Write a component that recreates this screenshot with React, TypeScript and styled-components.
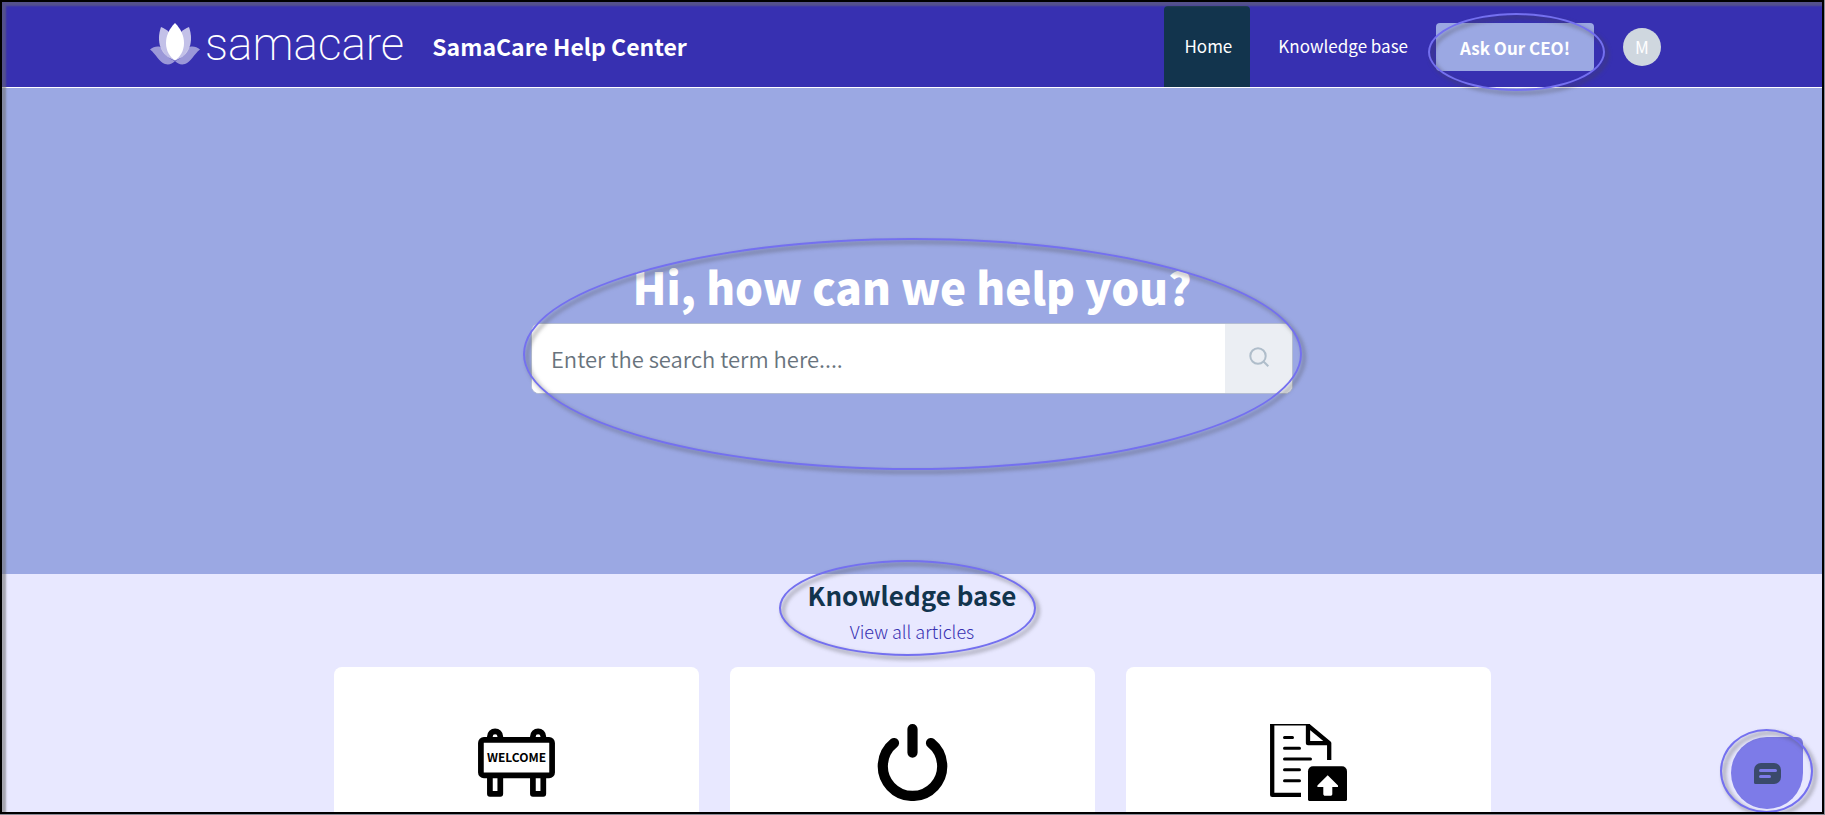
import React from "react";
import styled, { createGlobalStyle } from "styled-components";

const GlobalStyle = createGlobalStyle`
  * { box-sizing: border-box; }
  body {
    margin: 0;
    background: #8a8a96;
    font-family: "Noto Sans CJK SC", "Open Sans", sans-serif;
    color: #12344d;
  }
  a { color: inherit; text-decoration: none; }
  h1, h2, p { margin: 0; }
`;

const Frame = styled.div`
  position: relative;
  height: calc(100vh - 1px);
  margin: 0 1px 1px 0;
  border: 2px solid #000;
  background: #e8e8ff;
  overflow: hidden;

  &::after {
    content: "";
    position: absolute;
    inset: 0;
    z-index: 5;
    pointer-events: none;
    box-shadow: inset 4px 4px 2px rgba(110, 110, 110, 0.55);
  }
`;

const Page = styled.div`
  height: 100%;
  overflow: auto;
  scrollbar-width: none;
`;

const Header = styled.header`
  position: relative;
  z-index: 2;
  display: flex;
  align-items: stretch;
  justify-content: space-between;
  height: 86px;
  padding: 4px 161px 0 148px;
  background: #3730b1;
  border-bottom: 1px solid #fff;
`;

const Brand = styled.a`
  display: flex;
  align-items: center;
  gap: 28px;
  color: #fff;
`;

const Logo = styled.span`
  display: flex;
  align-items: center;
  gap: 5px;
  padding-bottom: 6px;
`;

const LogoWord = styled.span`
  font: 200 46px/52px Roboto, "Liberation Sans", sans-serif;
  color: #fff;
`;

const SiteTitle = styled.span`
  font-size: 23px;
  font-weight: 700;
  line-height: 32px;
  padding-bottom: 2px;
`;

const Nav = styled.nav`
  display: flex;
  align-items: center;
`;

const NavLink = styled.a<{ $active?: boolean }>`
  display: flex;
  align-items: center;
  align-self: stretch;
  padding: 0 ${(p) => (p.$active ? 18 : 28)}px 2px ${(p) => (p.$active ? 20 : 28)}px;
  border-radius: 4px 4px 0 0;
  background: ${(p) => (p.$active ? "#12344d" : "transparent")};
  color: #fff;
  font-size: 17px;
  line-height: 24px;
`;

const Marked = styled.div`
  position: relative;
`;

const Ring = styled.span<{ $inset: string }>`
  position: absolute;
  inset: ${(p) => p.$inset};
  border: 2px solid #7470f0;
  border-radius: 50%;
  filter: drop-shadow(3px 3px 2px rgba(70, 70, 70, 0.7));
  pointer-events: none;
`;

const AskButton = styled.button`
  display: block;
  height: 48px;
  padding: 2px 24px 0;
  border: 0;
  border-radius: 4px;
  background: #9ba8e3;
  color: #fff;
  font: inherit;
  font-size: 17px;
  font-weight: 700;
  line-height: 24px;
  white-space: nowrap;
`;

const Avatar = styled.button`
  width: 38px;
  height: 38px;
  margin-left: 29px;
  padding: 0;
  border: 0;
  border-radius: 50%;
  background: #cfd7df;
  color: #fff;
  font: inherit;
  font-size: 17px;
`;

const Hero = styled.section`
  display: flex;
  flex-direction: column;
  align-items: center;
  padding: 172px 24px 180px;
  background: #9ba8e3;
`;

const HeroBlock = styled.div`
  position: relative;
  width: 100%;
  max-width: 762px;
`;

const HeroTitle = styled.h1`
  padding-bottom: 11px;
  color: #fff;
  font-size: 44px;
  font-weight: 900;
  line-height: 52px;
  text-align: center;
`;

const SearchForm = styled.form`
  display: flex;
  height: 71px;
  border: 1px solid #b4bdd2;
  border-radius: 8px;
  background: #fff;
  overflow: hidden;
`;

const SearchInput = styled.input`
  flex: 1;
  min-width: 0;
  padding: 0 19px 2px;
  border: 0;
  outline: 0;
  background: #fff;
  color: #12344d;
  font: inherit;
  font-size: 22px;
  font-weight: 350;

  &::placeholder { color: #68737d; opacity: 1; }
`;

const SearchButton = styled.button`
  display: flex;
  align-items: center;
  justify-content: center;
  width: 67px;
  padding: 0 0 4px;
  border: 0;
  background: #ebeef3;
`;

const Knowledge = styled.section`
  display: flex;
  flex-direction: column;
  align-items: center;
  padding: 4px 24px 40px;
`;

const SectionHead = styled.div`
  position: relative;
  text-align: center;
`;

const SectionTitle = styled.h2`
  font-size: 26px;
  font-weight: 700;
  line-height: 34px;
`;

const ViewAll = styled.a`
  display: block;
  color: #3730b1;
  font-size: 18px;
  font-weight: 300;
  line-height: 38px;
`;

const Cards = styled.div`
  display: grid;
  grid-template-columns: repeat(3, 1fr);
  gap: 31px;
  width: 100%;
  max-width: 1157px;
  margin-top: 17px;
`;

const Card = styled.a`
  display: flex;
  justify-content: center;
  padding: 57px 24px;
  border-radius: 8px;
  background: #fff;
`;

const ChatDock = styled.div`
  position: absolute;
  right: 19px;
  bottom: 3px;
  z-index: 3;
`;

const ChatButton = styled.button`
  display: flex;
  align-items: center;
  justify-content: center;
  width: 72px;
  height: 72px;
  padding: 0;
  border: 0;
  border-radius: 36px 6px 36px 36px;
  background: #7d7be8;
`;

const Lotus = () => (
  <svg width="50" height="42" viewBox="0 0 50 42" aria-hidden="true">
    <g fill="#fff">
      <path opacity="0.5" d="M0 26.5C3 24 7 23 10.500 24C14 31 19 36 25 38C22 41 19 42 15 41C9 39 6 31 0 26.500Z" />
      <path opacity="0.5" d="M50 26.500C47 24 43 23 39.500 24C36 31 31 36 25 38C28 41 31 42 35 41C41 39 44 31 50 26.500Z" />
      <path opacity="0.7" d="M11 4C14 5 17 7 19 9L25 37.500C10 33 6 18 11 4Z" />
      <path opacity="0.7" d="M39 4C36 5 33 7 31 9L25 37.500C40 33 44 18 39 4Z" />
      <path d="M25 0C31 6 34 13 34 20C34 28 30 34 25 37.500C20 34 16 28 16 20C16 13 19 6 25 0Z" />
    </g>
  </svg>
);

const SearchIcon = () => (
  <svg width="20" height="20" viewBox="0 0 20 20" fill="none" stroke="#afbdca" strokeWidth="2" aria-hidden="true">
    <circle cx="9" cy="9" r="7.700" />
    <path d="M14.500 14.500L19.300 19.300" />
  </svg>
);

const WelcomeIcon = () => (
  <svg width="77" height="77" viewBox="0 0 77 77" fill="none" stroke="#000" strokeWidth="5.700">
    <rect x="2.900" y="15.900" width="71.200" height="35.500" rx="3" />
    <path d="M11.900 15V12.500a5.200 5.200 0 0 1 10.400 0V15M54.900 15V12.500a5.200 5.200 0 0 1 10.400 0V15" />
    <path strokeLinejoin="round" d="M11.900 52V69.800H22.300V52M54.900 52V69.800H65.300V52" />
    <text x="38.500" y="38" textAnchor="middle" fill="#000" stroke="none" fontFamily="Noto Sans CJK SC, sans-serif" fontWeight="700" fontSize="12">
      WELCOME
    </text>
  </svg>
);

const PowerIcon = () => (
  <svg width="77" height="77" viewBox="0 0 77 77" fill="none" stroke="#000" strokeWidth="10.200" strokeLinecap="round">
    <path d="M38.500 5.100V28.600M20 19A29.700 29.700 0 1 0 57 19" />
  </svg>
);

const UploadIcon = () => (
  <svg width="77" height="77" viewBox="0 0 77 77" fill="none" stroke="#000" strokeWidth="4.300">
    <path strokeLinejoin="round" d="M2.200 0V70.900H31" />
    <path strokeWidth="1.500" d="M0 .7H40" />
    <path strokeLinejoin="round" d="M38 1.500V19.200H59.200ZM59.200 19V36" />
    <path strokeWidth="3" strokeLinecap="round" d="M14.500 13.500H22.500M14.500 24.300H29.500M14.500 35H40.500M14.500 45.700H29.500M14.500 56.700H29.500" />
    <path fill="#000" stroke="none" d="M43 42.300H72A5 5 0 0 1 77 47.300V76L76 77H39L38 76V47.300A5 5 0 0 1 43 42.300Z" />
    <path fill="#fff" stroke="none" d="M57.700 51.300L68 61.500V63H62.300V70.500L61.300 71.700H54.300L53.300 70.500V63H47.400V61.500Z" />
  </svg>
);

const ChatIcon = () => (
  <svg width="27" height="21" viewBox="0 0 27 21" aria-hidden="true">
    <path fill="#3a4a6b" d="M7 0H20A7 7 0 0 1 27 7V14A7 7 0 0 1 20 21H1.500A1.500 1.500 0 0 1 0 19.500V7A7 7 0 0 1 7 0Z" />
    <path stroke="#7d7be8" strokeWidth="3" strokeLinecap="round" d="M6.500 7.500H21.500M6.500 13.500H15.500" />
  </svg>
);

const categories = [
  { label: "Welcome", Icon: WelcomeIcon },
  { label: "Getting started", Icon: PowerIcon },
  { label: "Uploads", Icon: UploadIcon },
];

export default function App() {
  return (
    <Frame>
      <GlobalStyle />
      <Page>
        <Header>
          <Brand href="#">
            <Logo>
              <Lotus />
              <LogoWord>samacare</LogoWord>
            </Logo>
            <SiteTitle>SamaCare Help Center</SiteTitle>
          </Brand>
          <Nav>
            <NavLink href="#" $active>Home</NavLink>
            <NavLink href="#knowledge">Knowledge base</NavLink>
            <Marked>
              <AskButton type="button">Ask Our CEO!</AskButton>
              <Ring $inset="-10px -11px -20px -8px" />
            </Marked>
            <Avatar type="button" aria-label="Account">M</Avatar>
          </Nav>
        </Header>
        <main>
          <Hero>
            <HeroBlock>
              <HeroTitle>Hi, how can we help you?</HeroTitle>
              <SearchForm role="search">
                <SearchInput type="search" aria-label="Search" placeholder="Enter the search term here...." />
                <SearchButton type="submit" aria-label="Submit search">
                  <SearchIcon />
                </SearchButton>
              </SearchForm>
              <Ring $inset="-22px -9px -76px -8px" />
            </HeroBlock>
          </Hero>
          <Knowledge id="knowledge">
            <SectionHead>
              <SectionTitle>Knowledge base</SectionTitle>
              <ViewAll href="#articles">View all articles</ViewAll>
              <Ring $inset="-18px -20px -6px -29px" />
            </SectionHead>
            <Cards>
              {categories.map(({ label, Icon }) => (
                <Card key={label} href="#articles" aria-label={label}>
                  <Icon />
                </Card>
              ))}
            </Cards>
          </Knowledge>
        </main>
      </Page>
      <ChatDock>
        <ChatButton type="button" aria-label="Open chat">
          <ChatIcon />
        </ChatButton>
        <Ring $inset="-8px -10px -4px -11px" />
      </ChatDock>
    </Frame>
  );
}
